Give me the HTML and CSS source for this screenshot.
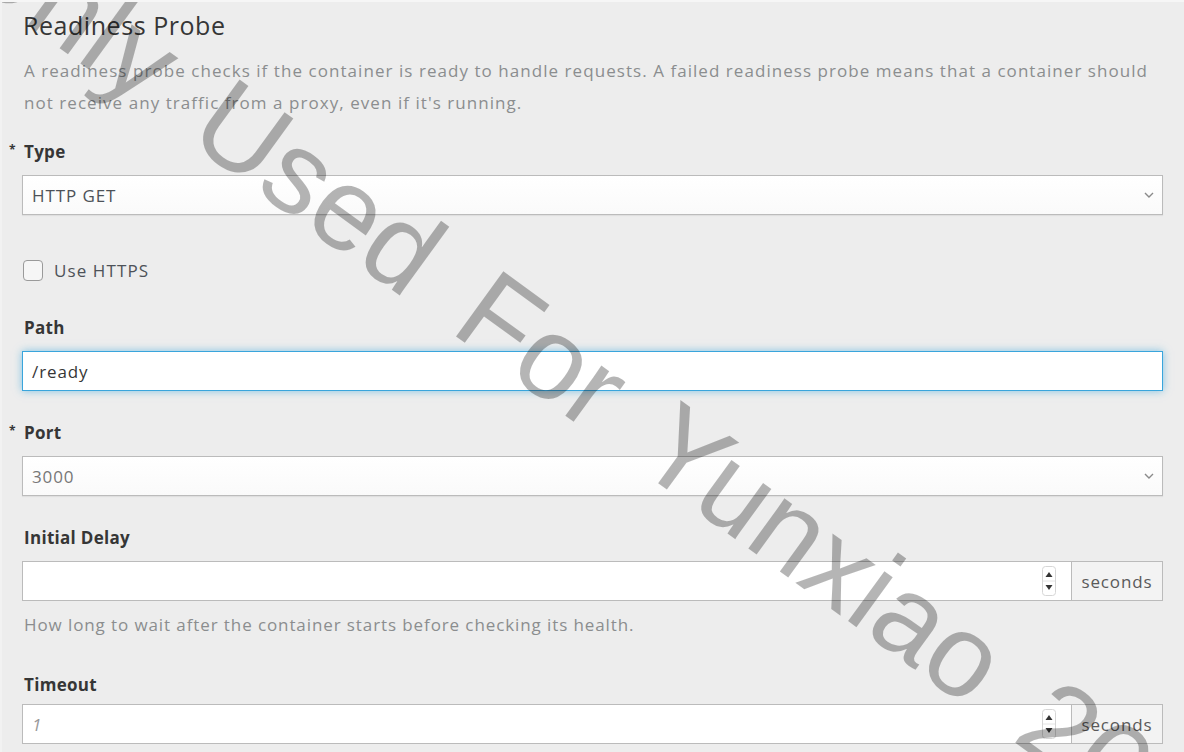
FILE: index.html
```html
<!DOCTYPE html>
<html lang="en">
<head>
<meta charset="utf-8">
<title>Readiness Probe</title>
<link rel="stylesheet" href="styles.css">
</head>
<body>
<div class="form">
  <h2 class="title">Readiness Probe</h2>
  <p class="desc">A readiness probe checks if the container is ready to handle requests. A failed readiness probe means that a container should not receive any traffic from a proxy, even if it's running.</p>

  <div class="group">
    <label class="label required">Type</label>
    <div class="control select">
      <span class="value">HTTP GET</span>
      <svg class="chev" width="10" height="6" viewBox="0 0 10 6"><polyline points="1,1 5,5 9,1" fill="none" stroke="#8a8a8a" stroke-width="1.4"/></svg>
    </div>
  </div>

  <div class="group check-group">
    <label class="check"><span class="box"></span><span class="check-text">Use HTTPS</span></label>
  </div>

  <div class="group">
    <label class="label">Path</label>
    <div class="control focused"><span class="value">/ready</span></div>
  </div>

  <div class="group">
    <label class="label required">Port</label>
    <div class="control select">
      <span class="value muted">3000</span>
      <svg class="chev" width="10" height="6" viewBox="0 0 10 6"><polyline points="1,1 5,5 9,1" fill="none" stroke="#8a8a8a" stroke-width="1.4"/></svg>
    </div>
  </div>

  <div class="group help-group">
    <label class="label">Initial Delay</label>
    <div class="input-group">
      <div class="control number">
        <span class="value"></span>
        <svg class="spin" width="14" height="30" viewBox="0 0 14 30"><rect x="0.5" y="0.5" width="13" height="29" rx="3" fill="#fff" stroke="#d6d6d6"/><line x1="1" y1="15" x2="13" y2="15" stroke="#e4e4e4"/><polygon points="3.5,11 7,6 10.5,11" fill="#333"/><polygon points="3.5,19 10.5,19 7,24" fill="#333"/></svg>
      </div>
      <span class="addon">seconds</span>
    </div>
    <p class="help">How long to wait after the container starts before checking its health.</p>
  </div>

  <div class="group tight">
    <label class="label">Timeout</label>
    <div class="input-group">
      <div class="control number">
        <span class="value placeholder">1</span>
        <svg class="spin" width="14" height="30" viewBox="0 0 14 30"><rect x="0.5" y="0.5" width="13" height="29" rx="3" fill="#fff" stroke="#d6d6d6"/><line x1="1" y1="15" x2="13" y2="15" stroke="#e4e4e4"/><polygon points="3.5,11 7,6 10.5,11" fill="#333"/><polygon points="3.5,19 10.5,19 7,24" fill="#333"/></svg>
      </div>
      <span class="addon">seconds</span>
    </div>
  </div>
</div>
<div class="watermark">Only Used For Yunxiao 2021</div>
</body>
</html>
```
FILE: styles.css
```css
* { box-sizing: border-box; }
html, body { margin: 0; height: 100%; }
body {
  background: #ededed;
  font-family: "Open Sans", "Liberation Sans", sans-serif;
  color: #363636;
  overflow: hidden;
  position: relative;
  border-top: 2px solid #f6f6f6;
  border-left: 2px solid #f2f2f2;
}
.form { padding: 7px 21px 0 20px; }
.title {
  font-size: 25px;
  font-weight: 400;
  line-height: 32px;
  letter-spacing: 0.55px;
  margin: 0 0 14px 1px;
  color: #363636;
}
.desc {
  font-size: 17px;
  line-height: 32px;
  letter-spacing: 1.05px;
  color: #8b8d8f;
  margin: 0 0 19px 2px;
}
.group { margin-bottom: 28px; }
.label {
  display: block;
  position: relative;
  font-size: 17px;
  font-weight: 700;
  line-height: 24px;
  letter-spacing: 0.3px;
  padding-top: 2px;
  margin-bottom: 11px;
  padding-left: 2px;
  color: #363636;
}
.label.required::before {
  content: "*";
  position: absolute;
  left: -13px;
  top: 0;
  font-size: 12px;
}
.control {
  height: 40px;
  background: #fff;
  border: 1px solid #bbb;
  display: flex;
  align-items: center;
  padding: 0 9px;
  font-size: 17px;
  letter-spacing: 0.9px;
  color: #363636;
}
.select {
  justify-content: space-between;
  background: linear-gradient(#fff, #fafafa);
  box-shadow: 0 1px 1px rgba(0, 0, 0, 0.06);
  padding-right: 8px;
}
.value { color: #4d5258; }
.value.muted { color: #777; }
.value.placeholder { color: #999; font-style: italic; }
.focused {
  border-color: #39a5dc;
  box-shadow: 0 0 8px rgba(57, 165, 220, 0.6);
}
.focused .value { color: #363636; }
.check-group { padding-top: 15px; margin-bottom: 32px; }
.check { display: flex; align-items: center; height: 24px; }
.box {
  width: 20px;
  height: 21px;
  border: 1px solid #9a9a9a;
  border-radius: 4px;
  background: #f6f6f6;
  margin-left: 1px;
}
.check-text { margin-left: 11px; font-size: 17px; letter-spacing: 1.1px; color: #4d5258; }
.input-group { display: flex; }
.number { flex: 1; justify-content: space-between; padding-right: 15px; }
.addon {
  width: 91px;
  height: 40px;
  border: 1px solid #bbb;
  border-left: none;
  background: #f3f3f3;
  display: flex;
  align-items: center;
  justify-content: center;
  font-size: 17px;
  letter-spacing: 0.9px;
  color: #5a5a5a;
}
.help {
  margin: 12px 0 0 2px;
  font-size: 17px;
  line-height: 24px;
  letter-spacing: 0.9px;
  color: #8b8d8f;
}
.help-group { margin-bottom: 34px; }
.tight .label { margin-bottom: 7px; }
.watermark {
  position: absolute;
  left: 4px;
  top: -115px;
  transform: rotate(36deg);
  transform-origin: 0 0;
  font-family: "Liberation Sans", Arial, sans-serif;
  font-size: 117px;
  line-height: 1;
  word-spacing: 20px;
  white-space: nowrap;
  color: rgba(0, 0, 0, 0.29);
  pointer-events: none;
}
```
